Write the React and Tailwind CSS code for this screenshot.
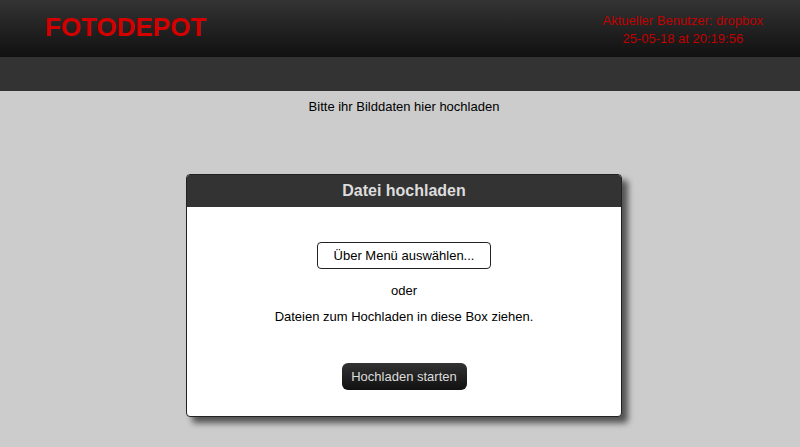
import React from 'react';

const font = { fontFamily: '"Liberation Sans", Arial, sans-serif' };

export default function App() {
  return (
    <div className="min-h-[447px] bg-[#cccccc] text-[13px] text-black" style={font}>
      {/* Header */}
      <header className="h-[57px] bg-gradient-to-b from-[#343434] to-[#111111] flex items-start justify-between">
        <h1 className="ml-[45px] mt-[12px] text-[26px] leading-[30px] font-bold text-[#d40000]">FOTODEPOT</h1>
        <div className="mr-[37px] mt-[12px] text-center text-[13px] leading-[18px] text-[#c00000]">
          <div>Aktueller Benutzer: dropbox</div>
          <div>25-05-18 at 20:19:56</div>
        </div>
      </header>
      {/* Nav bar */}
      <nav className="h-[34px] bg-[#333333]" />

      <main className="pl-[8px] pb-[30px]">
        <p className="pt-[7px] text-center leading-[18px]">Bitte ihr Bilddaten hier hochladen</p>

        {/* Upload box */}
        <div className="mx-auto mt-[58px] w-[436px] rounded-[4px] border border-[#222] bg-white shadow-[6px_6px_6px_rgba(0,0,0,0.6)] overflow-hidden">
          <div className="h-[32px] bg-[#333333] flex items-center justify-center text-[16px] font-bold text-[#dddddd]">
            Datei hochladen
          </div>
          <div className="flex flex-col items-center pt-[35px] pb-[26px]">
            <button className="w-[174px] h-[27px] rounded-[4px] border border-[#222] bg-white text-[13px] text-black">
              Über Menü auswählen...
            </button>
            <p className="mt-[13px] leading-[18px]">oder</p>
            <p className="mt-[8px] leading-[18px]">Dateien zum Hochladen in diese Box ziehen.</p>
            <button className="mt-[37px] w-[125px] h-[27px] rounded-[6px] bg-gradient-to-b from-[#333333] to-[#111111] text-[13px] text-[#dddddd]">
              Hochladen starten
            </button>
          </div>
        </div>
      </main>
    </div>
  );
}
